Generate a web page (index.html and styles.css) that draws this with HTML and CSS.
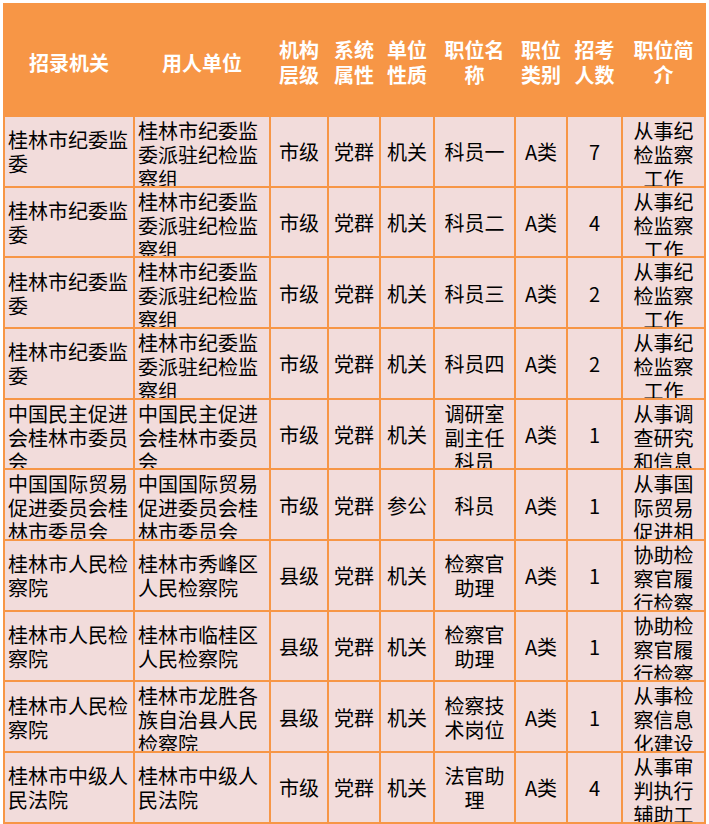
FILE: index.html
```html
<!DOCTYPE html>
<html lang="zh-CN">
<head>
<meta charset="utf-8">
<title>招录职位表</title>
<link rel="stylesheet" href="styles.css">
</head>
<body>
<div class="sheet">
  <div class="hd"><div class="in">招录机关</div></div>
  <div class="hd"><div class="in">用人单位</div></div>
  <div class="hd"><div class="in">机构层级</div></div>
  <div class="hd"><div class="in">系统属性</div></div>
  <div class="hd"><div class="in">单位性质</div></div>
  <div class="hd"><div class="in">职位名称</div></div>
  <div class="hd"><div class="in">职位类别</div></div>
  <div class="hd"><div class="in">招考人数</div></div>
  <div class="hd"><div class="in">职位简介</div></div>

  <div class="td l"><div class="in">桂林市纪委监委</div></div>
  <div class="td l"><div class="in">桂林市纪委监委派驻纪检监察组</div></div>
  <div class="td"><div class="in">市级</div></div>
  <div class="td"><div class="in">党群</div></div>
  <div class="td"><div class="in">机关</div></div>
  <div class="td"><div class="in">科员一</div></div>
  <div class="td"><div class="in">A类</div></div>
  <div class="td"><div class="in">7</div></div>
  <div class="td"><div class="in">从事纪检监察工作</div></div>

  <div class="td l"><div class="in">桂林市纪委监委</div></div>
  <div class="td l"><div class="in">桂林市纪委监委派驻纪检监察组</div></div>
  <div class="td"><div class="in">市级</div></div>
  <div class="td"><div class="in">党群</div></div>
  <div class="td"><div class="in">机关</div></div>
  <div class="td"><div class="in">科员二</div></div>
  <div class="td"><div class="in">A类</div></div>
  <div class="td"><div class="in">4</div></div>
  <div class="td"><div class="in">从事纪检监察工作</div></div>

  <div class="td l"><div class="in">桂林市纪委监委</div></div>
  <div class="td l"><div class="in">桂林市纪委监委派驻纪检监察组</div></div>
  <div class="td"><div class="in">市级</div></div>
  <div class="td"><div class="in">党群</div></div>
  <div class="td"><div class="in">机关</div></div>
  <div class="td"><div class="in">科员三</div></div>
  <div class="td"><div class="in">A类</div></div>
  <div class="td"><div class="in">2</div></div>
  <div class="td"><div class="in">从事纪检监察工作</div></div>

  <div class="td l"><div class="in">桂林市纪委监委</div></div>
  <div class="td l"><div class="in">桂林市纪委监委派驻纪检监察组</div></div>
  <div class="td"><div class="in">市级</div></div>
  <div class="td"><div class="in">党群</div></div>
  <div class="td"><div class="in">机关</div></div>
  <div class="td"><div class="in">科员四</div></div>
  <div class="td"><div class="in">A类</div></div>
  <div class="td"><div class="in">2</div></div>
  <div class="td"><div class="in">从事纪检监察工作</div></div>

  <div class="td l"><div class="in">中国民主促进会桂林市委员会</div></div>
  <div class="td l"><div class="in">中国民主促进会桂林市委员会</div></div>
  <div class="td"><div class="in">市级</div></div>
  <div class="td"><div class="in">党群</div></div>
  <div class="td"><div class="in">机关</div></div>
  <div class="td"><div class="in">调研室副主任科员</div></div>
  <div class="td"><div class="in">A类</div></div>
  <div class="td"><div class="in">1</div></div>
  <div class="td"><div class="in">从事调查研究和信息</div></div>

  <div class="td l"><div class="in">中国国际贸易促进委员会桂林市委员会</div></div>
  <div class="td l"><div class="in">中国国际贸易促进委员会桂林市委员会</div></div>
  <div class="td"><div class="in">市级</div></div>
  <div class="td"><div class="in">党群</div></div>
  <div class="td"><div class="in">参公</div></div>
  <div class="td"><div class="in">科员</div></div>
  <div class="td"><div class="in">A类</div></div>
  <div class="td"><div class="in">1</div></div>
  <div class="td"><div class="in">从事国际贸易促进相</div></div>

  <div class="td l"><div class="in">桂林市人民检察院</div></div>
  <div class="td l"><div class="in">桂林市秀峰区人民检察院</div></div>
  <div class="td"><div class="in">县级</div></div>
  <div class="td"><div class="in">党群</div></div>
  <div class="td"><div class="in">机关</div></div>
  <div class="td"><div class="in">检察官助理</div></div>
  <div class="td"><div class="in">A类</div></div>
  <div class="td"><div class="in">1</div></div>
  <div class="td"><div class="in">协助检察官履行检察</div></div>

  <div class="td l"><div class="in">桂林市人民检察院</div></div>
  <div class="td l"><div class="in">桂林市临桂区人民检察院</div></div>
  <div class="td"><div class="in">县级</div></div>
  <div class="td"><div class="in">党群</div></div>
  <div class="td"><div class="in">机关</div></div>
  <div class="td"><div class="in">检察官助理</div></div>
  <div class="td"><div class="in">A类</div></div>
  <div class="td"><div class="in">1</div></div>
  <div class="td"><div class="in">协助检察官履行检察</div></div>

  <div class="td l"><div class="in">桂林市人民检察院</div></div>
  <div class="td l"><div class="in">桂林市龙胜各族自治县人民检察院</div></div>
  <div class="td"><div class="in">县级</div></div>
  <div class="td"><div class="in">党群</div></div>
  <div class="td"><div class="in">机关</div></div>
  <div class="td"><div class="in">检察技术岗位</div></div>
  <div class="td"><div class="in">A类</div></div>
  <div class="td"><div class="in">1</div></div>
  <div class="td"><div class="in">从事检察信息化建设</div></div>

  <div class="td l"><div class="in">桂林市中级人民法院</div></div>
  <div class="td l"><div class="in">桂林市中级人民法院</div></div>
  <div class="td"><div class="in">市级</div></div>
  <div class="td"><div class="in">党群</div></div>
  <div class="td"><div class="in">机关</div></div>
  <div class="td"><div class="in">法官助理</div></div>
  <div class="td"><div class="in">A类</div></div>
  <div class="td"><div class="in">4</div></div>
  <div class="td"><div class="in">从事审判执行辅助工</div></div>
</div>
</body>
</html>
```
FILE: styles.css
```css
html, body {
  margin: 0;
  padding: 0;
  background: #ffffff;
}

body {
  padding: 3px 0 0 3px;
  font-family: "Noto Sans CJK SC", "Noto Sans", sans-serif;
  font-size: 20px;
  color: #000000;
}

.sheet {
  display: grid;
  width: 703px;
  box-sizing: border-box;
  grid-template-columns: 128px 134px 56px 50px 52px 79px 50px 53px 81px;
  grid-template-rows: 110px;
  grid-auto-rows: 68.67px;
  gap: 2px;
  padding: 2px;
  background: #f79646;
}

.hd, .td {
  display: flex;
  flex-direction: column;
  overflow: hidden;
  padding: 0 3px;
  text-align: center;
}

.hd {
  background: #f79646;
  color: #ffffff;
  font-weight: 700;
  line-height: 25px;
  padding-top: 4px;
}

.td {
  background: #f2dcdb;
  line-height: 24px;
  padding-top: 2px;
}

.td.l {
  text-align: left;
}

.in {
  margin: auto 0;
}
```
